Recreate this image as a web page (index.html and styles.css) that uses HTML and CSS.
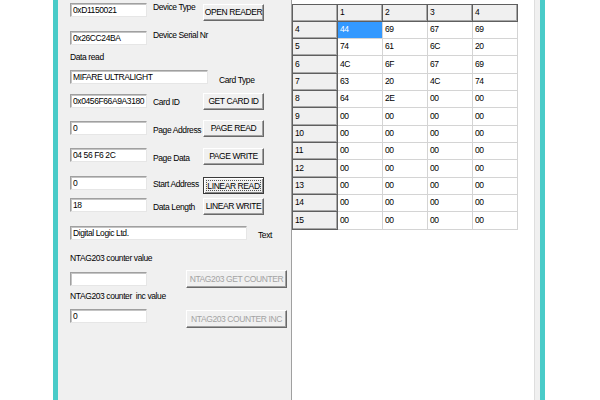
FILE: index.html
```html
<!DOCTYPE html>
<html>
<head>
<meta charset="utf-8">
<link rel="stylesheet" href="styles.css">
</head>
<body>
<div class="screen">
  <div class="side-l"></div>
  <div class="teal"></div>
  <div class="window">
    <div class="panel">
      <div class="row r1">
        <div class="tb mt1">0xD1150021</div>
        <div class="lbl">Device Type</div>
        <div class="btn mt2">OPEN READER</div>
      </div>
      <div class="row r2">
        <div class="tb mt1">0x26CC24BA</div>
        <div class="lbl">Device Serial Nr</div>
      </div>
      <div class="row r3">
        <div class="lbl first">Data read</div>
      </div>
      <div class="row r4">
        <div class="tb w138">MIFARE ULTRALIGHT</div>
        <div class="lbl far mt5">Card Type</div>
      </div>
      <div class="row r5">
        <div class="tb mt1">0x0456F66A9A3180</div>
        <div class="lbl mt4">Card ID</div>
        <div class="btn">GET CARD ID</div>
      </div>
      <div class="row r6">
        <div class="tb mt1">0</div>
        <div class="lbl mt5">Page Address</div>
        <div class="btn">PAGE READ</div>
      </div>
      <div class="row r7">
        <div class="tb">04 56 F6 2C</div>
        <div class="lbl mt5">Page Data</div>
        <div class="btn">PAGE WRITE</div>
      </div>
      <div class="row r8">
        <div class="tb">0</div>
        <div class="lbl mt3">Start Address</div>
        <div class="btn focused mt1"><span class="focus-rect">LINEAR READ</span></div>
      </div>
      <div class="row r9">
        <div class="tb">18</div>
        <div class="lbl mt4">Data Length</div>
        <div class="btn">LINEAR WRITE</div>
      </div>
      <div class="row r10">
        <div class="tb w177">Digital Logic Ltd.</div>
        <div class="lbl far mt4">Text</div>
      </div>
      <div class="row r11">
        <div class="lbl first">NTAG203 counter value</div>
      </div>
      <div class="row r12">
        <div class="tb mt2"></div>
        <div class="btn wide disabled">NTAG203 GET COUNTER</div>
      </div>
      <div class="row r13">
        <div class="lbl first pre">NTAG203 counter  inc value</div>
      </div>
      <div class="row r14">
        <div class="tb">0</div>
        <div class="btn wide disabled mt1">NTAG203 COUNTER INC</div>
      </div>
    </div>
    <div class="gridbox">
      <div class="grid">
        <div class="c h top left"></div><div class="c h top">1</div><div class="c h top">2</div><div class="c h top">3</div><div class="c h top">4</div>
        <div class="c h left">4</div><div class="c sel">44</div><div class="c">69</div><div class="c">67</div><div class="c">69</div>
        <div class="c h left">5</div><div class="c">74</div><div class="c">61</div><div class="c">6C</div><div class="c">20</div>
        <div class="c h left">6</div><div class="c">4C</div><div class="c">6F</div><div class="c">67</div><div class="c">69</div>
        <div class="c h left">7</div><div class="c">63</div><div class="c">20</div><div class="c">4C</div><div class="c">74</div>
        <div class="c h left">8</div><div class="c">64</div><div class="c">2E</div><div class="c">00</div><div class="c">00</div>
        <div class="c h left">9</div><div class="c">00</div><div class="c">00</div><div class="c">00</div><div class="c">00</div>
        <div class="c h left">10</div><div class="c">00</div><div class="c">00</div><div class="c">00</div><div class="c">00</div>
        <div class="c h left">11</div><div class="c">00</div><div class="c">00</div><div class="c">00</div><div class="c">00</div>
        <div class="c h left">12</div><div class="c">00</div><div class="c">00</div><div class="c">00</div><div class="c">00</div>
        <div class="c h left">13</div><div class="c">00</div><div class="c">00</div><div class="c">00</div><div class="c">00</div>
        <div class="c h left">14</div><div class="c">00</div><div class="c">00</div><div class="c">00</div><div class="c">00</div>
        <div class="c h left">15</div><div class="c">00</div><div class="c">00</div><div class="c">00</div><div class="c">00</div>
      </div>
    </div>
  </div>
  <div class="teal"></div>
  <div class="side-r"></div>
</div>
</body>
</html>
```
FILE: styles.css
```css
html, body {
  margin: 0;
  padding: 0;
  background: #fff;
}
body {
  font-family: "Liberation Sans", Arial, sans-serif;
  font-size: 8.5px;
  letter-spacing: -0.4px;
  color: #000;
}
.screen {
  display: flex;
  width: 600px;
  height: 400px;
  overflow: hidden;
  background: #fff;
}
.side-l { width: 53px; flex-shrink: 0; }
.side-r { flex: 1; }
.teal { width: 5px; flex-shrink: 0; background: #49cbc8; }
.window {
  width: 482px;
  flex-shrink: 0;
  background: #f0f0f0;
  display: flex;
}
.panel {
  width: 221px;
  padding-left: 12px;
  display: flex;
  flex-direction: column;
  flex-shrink: 0;
}
.row { display: flex; align-items: flex-start; flex-shrink: 0; }
.r1 { margin-top: 2px; }
.r2 { margin-top: 9px; }
.r3 { margin-top: 7px; }
.r4 { margin-top: 7px; }
.r5 { margin-top: 7px; }
.r6 { margin-top: 10px; }
.r7 { margin-top: 11px; }
.r8 { margin-top: 11px; }
.r9 { margin-top: 4px; }
.r10 { margin-top: 11px; }
.r11 { margin-top: 12px; }
.r12 { margin-top: 6px; }
.r13 { margin-top: 3px; }
.r14 { margin-top: 7px; }

.mt1 { margin-top: 1px; }
.mt2 { margin-top: 2px; }
.mt3 { margin-top: 3px; }
.mt4 { margin-top: 4px; }
.mt5 { margin-top: 5px; }

.tb {
  box-sizing: border-box;
  width: 77px;
  height: 14px;
  background: #fff;
  border: 1px solid;
  border-color: #a0a0a0 #e6e6e6 #e6e6e6 #a0a0a0;
  box-shadow: inset 1px 1px 0 #c4c4c4;
  padding-left: 2px;
  display: flex;
  align-items: center;
  white-space: nowrap;
  overflow: hidden;
  flex-shrink: 0;
}
.tb.w138 { width: 138px; }
.tb.w177 { width: 177px; }

.lbl {
  width: 50px;
  margin-left: 6px;
  line-height: 11px;
  white-space: nowrap;
  flex-shrink: 0;
}
.lbl.first { margin-left: 0; width: auto; }
.lbl.far { margin-left: 11px; width: auto; }
.lbl.pre { white-space: pre; }

.btn {
  box-sizing: border-box;
  width: 61px;
  height: 17px;
  background: #f0f0f0;
  border: 1px solid;
  border-color: #fff #696969 #696969 #fff;
  box-shadow: inset -1px -1px 0 #a0a0a0;
  display: flex;
  align-items: center;
  justify-content: center;
  white-space: nowrap;
  flex-shrink: 0;
  padding-bottom: 1px;
}
.btn.wide {
  width: 101px;
  height: 18px;
  margin-left: 39px;
}
.btn.disabled { color: #a3a3a3; }
.btn.mt1 { margin-top: 1px; }
.btn.focused {
  border-color: #3a3a3a;
  box-shadow: inset 1px 1px 0 #fff, inset -1px -1px 0 #8a8a8a;
  padding: 2px;
}
.focus-rect {
  display: flex;
  align-items: center;
  justify-content: center;
  width: 100%;
  height: 100%;
  box-sizing: border-box;
  border: 1px dotted #555;
}

.gridbox {
  box-sizing: border-box;
  width: 244px;
  height: 400px;
  background: #fff;
  border-left: 1px solid #a0a0a0;
  border-right: 1px solid #dedede;
  flex-shrink: 0;
}
.grid {
  margin-top: 4px;
  display: grid;
  grid-template-columns: 46px repeat(4, 45px);
  grid-template-rows: 18px repeat(4, 17px 17px 18px);
}
.c {
  box-sizing: border-box;
  background: #fff;
  border-right: 1px solid #d4d4d4;
  border-bottom: 1px solid #d4d4d4;
  padding-left: 2px;
  padding-bottom: 2px;
  display: flex;
  align-items: center;
  white-space: nowrap;
}
.c.h {
  background: #f0f0f0;
  border-right-color: #5f5f5f;
  border-bottom-color: #5f5f5f;
  box-shadow: inset -1px -1px 0 #a8a8a8;
}
.c.top { border-top: 1px solid #5f5f5f; }
.c.left { border-left: 1px solid #5f5f5f; }
.c.sel { background: #3399ff; color: #fff; }
```
